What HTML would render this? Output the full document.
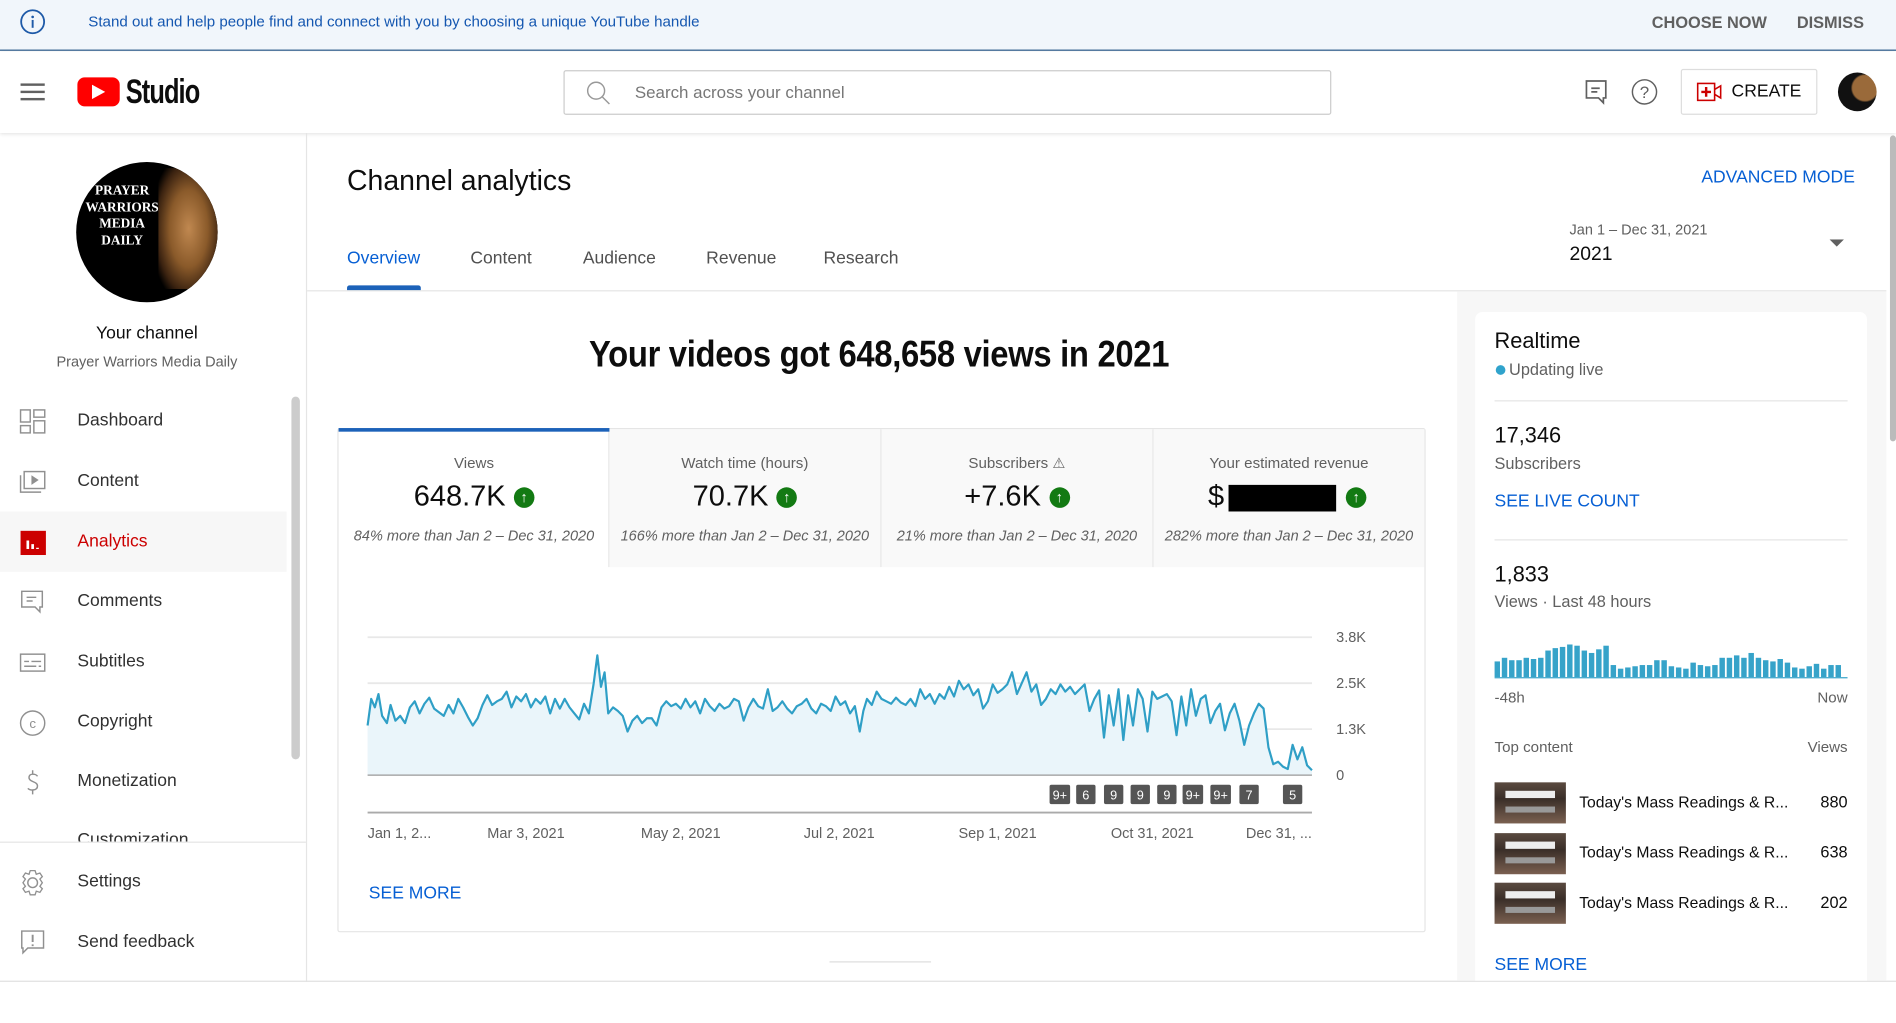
<!DOCTYPE html>
<html><head><meta charset="utf-8"><style>
*{margin:0;padding:0;box-sizing:border-box}
html,body{width:1896px;height:1023px;overflow:hidden;background:#fff}
#w{position:absolute;left:0;top:0;width:1568px;height:846px;transform:scale(1.20918);transform-origin:0 0;font-family:"Liberation Sans",Arial,sans-serif;color:#0d0d0d}
.a{position:absolute;line-height:1;white-space:nowrap}
.blue{color:#065fd4}
.g{color:#606060}
.nav{font-size:14.5px;color:#303030;left:64px}
.ic{position:absolute;left:16px}
</style></head><body><div id="w">
<!-- banner -->
<div class="a" style="left:0;top:0;width:1568px;height:42px;background:#f1f6fb;border-bottom:1px solid #2a5a8a"></div>
<svg class="a" style="left:16px;top:7px" width="22" height="22" viewBox="0 0 22 22"><circle cx="11" cy="11" r="9.5" fill="none" stroke="#1e5aa8" stroke-width="1.5"/><rect x="10.2" y="9.5" width="1.6" height="6.5" fill="#1e5aa8"/><circle cx="11" cy="7" r="1.1" fill="#1e5aa8"/></svg>
<div class="a blue" style="left:73px;top:12px;font-size:12.5px;color:#1557b0">Stand out and help people find and connect with you by choosing a unique YouTube handle</div>
<div class="a g" style="left:1366px;top:12px;font-size:13.5px;font-weight:bold">CHOOSE NOW</div>
<div class="a g" style="left:1486px;top:12px;font-size:13.5px;font-weight:bold">DISMISS</div>
<!-- header -->
<div class="a" style="left:0;top:43px;width:1568px;height:67px;background:#fff;box-shadow:0 1px 3px rgba(0,0,0,.12)"></div>
<div class="a" style="left:17px;top:69px;width:20px;height:1.5px;background:#606060;box-shadow:0 6px 0 #606060,0 12px 0 #606060"></div>
<div class="a" style="left:64px;top:64px;width:35px;height:24px;background:#f00;border-radius:6px"></div>
<svg class="a" style="left:76px;top:70px" width="12" height="12"><path d="M0 0L11 6L0 12Z" fill="#fff"/></svg>
<div class="a" style="left:104px;top:62px;font-size:28px;font-weight:bold;letter-spacing:-1px;transform:scaleX(.75);transform-origin:0 0">Studio</div>
<div class="a" style="left:466px;top:58px;width:635px;height:37px;border:1px solid #ccc;border-radius:2px"></div>
<svg class="a" style="left:484px;top:66px" width="22" height="22"><circle cx="9" cy="9" r="7" fill="none" stroke="#999" stroke-width="1.2"/><path d="M14 14L20 20" stroke="#999" stroke-width="1.2"/></svg>
<div class="a" style="left:525px;top:69px;font-size:14px;color:#777">Search across your channel</div>
<svg class="a" style="left:1309px;top:65px" width="22" height="22"><path d="M3 2H19V16H17V20L13 16H3Z" fill="none" stroke="#606060" stroke-width="1.4"/><path d="M7 8H14M7 11H12" stroke="#606060" stroke-width="1.4"/></svg>
<svg class="a" style="left:1349px;top:65px" width="22" height="22"><circle cx="11" cy="11" r="10" fill="none" stroke="#606060" stroke-width="1.2"/><text x="11" y="16" text-anchor="middle" font-size="14" fill="#606060" font-family="Liberation Sans">?</text></svg>
<div class="a" style="left:1390px;top:57px;width:113px;height:38px;border:1px solid #ddd;border-radius:2px"></div>
<svg class="a" style="left:1403px;top:67px" width="22" height="18"><rect x="1" y="2" width="14" height="14" fill="none" stroke="#cc0000" stroke-width="1.3"/><path d="M8 5V13M4 9H12" stroke="#cc0000" stroke-width="2"/><path d="M15 7L20 4V14L15 11" fill="none" stroke="#cc0000" stroke-width="1.3"/></svg>
<div class="a" style="left:1432px;top:69px;font-size:14.5px;font-weight:500">CREATE</div>
<div class="a" style="left:1520px;top:60px;width:32px;height:32px;border-radius:50%;background:radial-gradient(circle at 70% 40%,#9a6a3a 0 35%,#111 40%)"></div>
<!-- sidebar -->
<div class="a" style="left:253px;top:110px;width:1px;height:702px;background:#e5e5e5"></div>
<div class="a" style="left:63px;top:134px;width:117px;height:116px;border-radius:50%;background:#000;overflow:hidden">
<div class="a" style="left:68px;top:5px;width:50px;height:100px;background:radial-gradient(ellipse at 50% 50%,#c08850 0,#8a5a2a 45%,#3a2210 75%,#000 90%)"></div>
<div class="a" style="left:4px;top:18px;font-family:'Liberation Serif',serif;font-weight:bold;color:#fff;font-size:11px;line-height:13.5px;text-align:center;width:68px;white-space:normal">PRAYER WARRIORS MEDIA DAILY</div></div>
<div class="a" style="left:0;top:269px;width:243px;text-align:center;font-size:14.5px">Your channel</div>
<div class="a g" style="left:0;top:293px;width:243px;text-align:center;font-size:12px">Prayer Warriors Media Daily</div>
<div class="a" style="left:241px;top:328px;width:7px;height:300px;background:#ccc;border-radius:4px"></div>
<div class="a" style="left:0;top:423px;width:237px;height:50px;background:#f7f7f7"></div>
<svg class="ic" style="top:338px" width="22" height="22"><g fill="none" stroke="#909090" stroke-width="1.2"><rect x="1" y="1" width="8" height="10"/><rect x="12" y="1" width="9" height="6"/><rect x="1" y="14" width="8" height="6"/><rect x="12" y="10" width="9" height="10"/></g></svg>
<div class="a nav" style="top:341px">Dashboard</div>
<svg class="ic" style="top:388px" width="22" height="22"><g fill="none" stroke="#909090" stroke-width="1.2"><rect x="4" y="2" width="17" height="14"/><path d="M1 5V19H18"/></g><path d="M10 5L16 9L10 13Z" fill="#909090"/></svg>
<div class="a nav" style="top:391px">Content</div>
<svg class="ic" style="top:438px" width="22" height="22"><rect x="1" y="1" width="21" height="20" fill="#cc0000"/><path d="M7 9V16M11 12V16M15 15V16" stroke="#fff" stroke-width="2.2"/></svg>
<div class="a nav" style="top:441px;color:#cc0000">Analytics</div>
<svg class="ic" style="top:487px" width="22" height="22"><path d="M2 2H19V15H17V19L13 15H2Z" fill="none" stroke="#909090" stroke-width="1.2"/><path d="M6 7H14M6 10H11" stroke="#909090" stroke-width="1.2"/></svg>
<div class="a nav" style="top:490px">Comments</div>
<svg class="ic" style="top:537px" width="22" height="22"><rect x="1" y="4" width="20" height="14" fill="none" stroke="#909090" stroke-width="1.2"/><path d="M4 10H8M10 10H18M4 14H14M16 14H18" stroke="#909090" stroke-width="1.2"/></svg>
<div class="a nav" style="top:540px">Subtitles</div>
<svg class="ic" style="top:587px" width="22" height="22"><circle cx="11" cy="11" r="10" fill="none" stroke="#909090" stroke-width="1.2"/><text x="11" y="15" text-anchor="middle" font-size="11" fill="#909090" font-family="Liberation Sans">c</text></svg>
<div class="a nav" style="top:590px">Copyright</div>
<svg class="ic" style="top:636px" width="22" height="22"><path d="M15 6C14 4 8 3 8 7C8 11 15 10 15 14C15 18 9 18 7 16M11 1V4M11 18V21" fill="none" stroke="#909090" stroke-width="1.2"/></svg>
<div class="a nav" style="top:639px">Monetization</div>
<div class="a" style="left:0;top:684px;width:253px;height:12px;overflow:hidden"><div class="a nav" style="top:4px">Customization</div></div>
<div class="a" style="left:0;top:696px;width:253px;height:1px;background:#e5e5e5"></div>
<svg class="ic" style="top:719px" width="22" height="22"><circle cx="11" cy="11" r="4" fill="none" stroke="#909090" stroke-width="1.2"/><path d="M9 1H13L14 4L17 3L19 6L17 8L19 11L17 14L19 16L17 19L14 18L13 21H9L8 18L5 19L3 16L5 14L3 11L5 8L3 6L5 3L8 4Z" fill="none" stroke="#909090" stroke-width="1.1"/></svg>
<div class="a nav" style="top:722px">Settings</div>
<svg class="ic" style="top:768px" width="22" height="22"><path d="M2 2H20V16H7L3 20V16H2Z" fill="none" stroke="#909090" stroke-width="1.2"/><path d="M11 5V11M11 13V14.5" stroke="#909090" stroke-width="1.6"/></svg>
<div class="a nav" style="top:772px">Send feedback</div>
<div class="a" style="left:0;top:811px;width:1568px;height:1px;background:#e0e0e0"></div>
<!-- main header -->
<div class="a" style="left:287px;top:138px;font-size:23.5px">Channel analytics</div>
<div class="a blue" style="left:1407px;top:140px;font-size:14.5px;font-weight:500">ADVANCED MODE</div>
<div class="a blue" style="left:287px;top:207px;font-size:14.5px">Overview</div>
<div class="a g" style="left:389px;top:207px;font-size:14.5px;color:#505050">Content</div>
<div class="a g" style="left:482px;top:207px;font-size:14.5px;color:#505050">Audience</div>
<div class="a g" style="left:584px;top:207px;font-size:14.5px;color:#505050">Revenue</div>
<div class="a g" style="left:681px;top:207px;font-size:14.5px;color:#505050">Research</div>
<div class="a" style="left:287px;top:236px;width:61px;height:4px;background:#1c62b9;border-radius:2px 2px 0 0"></div>
<div class="a" style="left:254px;top:240px;width:1306px;height:1px;background:#e5e5e5"></div>
<div class="a g" style="left:1298px;top:184px;font-size:12px">Jan 1 – Dec 31, 2021</div>
<div class="a" style="left:1298px;top:203px;font-size:16px">2021</div>
<svg class="a" style="left:1513px;top:198px" width="12" height="7"><path d="M0 0H12L6 6Z" fill="#606060"/></svg>
<div class="a" style="left:1563px;top:112px;width:5px;height:253px;background:#bbb;border-radius:3px"></div>
<!-- right column -->
<div class="a" style="left:1205px;top:241px;width:355px;height:570px;background:#f7f7f7"></div>
<div class="a" style="left:1220px;top:258px;width:324px;height:553px;background:#fff;border-radius:6px 6px 0 0"></div>
<div class="a" style="left:1236px;top:273px;font-size:18px;font-weight:500">Realtime</div>
<div class="a" style="left:1237px;top:302px;width:8px;height:8px;border-radius:50%;background:#30a3cc"></div>
<div class="a g" style="left:1248px;top:299px;font-size:13.5px">Updating live</div>
<div class="a" style="left:1236px;top:331px;width:292px;height:1px;background:#e5e5e5"></div>
<div class="a" style="left:1236px;top:351px;font-size:18px;font-weight:500">17,346</div>
<div class="a g" style="left:1236px;top:377px;font-size:13.5px">Subscribers</div>
<div class="a blue" style="left:1236px;top:408px;font-size:14.5px;font-weight:500">SEE LIVE COUNT</div>
<div class="a" style="left:1236px;top:446px;width:292px;height:1px;background:#e5e5e5"></div>
<div class="a" style="left:1236px;top:466px;font-size:18px;font-weight:500">1,833</div>
<div class="a g" style="left:1236px;top:491px;font-size:13.5px">Views · Last 48 hours</div>
<svg class="a" style="left:1236px;top:520px" width="292" height="44">
<g fill="#36a3c9">
<rect x="0" y="27" width="4.5" height="13"/><rect x="6" y="24" width="4.5" height="16"/><rect x="12" y="26" width="4.5" height="14"/><rect x="18" y="26" width="4.5" height="14"/><rect x="24" y="24" width="4.5" height="16"/><rect x="30" y="25" width="4.5" height="15"/><rect x="36" y="24" width="4.5" height="16"/><rect x="42" y="18" width="4.5" height="22"/><rect x="48" y="16" width="4.5" height="24"/><rect x="54" y="15" width="4.5" height="25"/><rect x="60" y="13" width="4.5" height="27"/><rect x="66" y="14" width="4.5" height="26"/><rect x="72" y="18" width="4.5" height="22"/><rect x="78" y="20" width="4.5" height="20"/><rect x="84" y="17" width="4.5" height="23"/><rect x="90" y="14" width="4.5" height="26"/><rect x="96" y="30" width="4.5" height="10"/><rect x="102" y="33" width="4.5" height="7"/><rect x="108" y="32" width="4.5" height="8"/><rect x="114" y="31" width="4.5" height="9"/><rect x="120" y="30" width="4.5" height="10"/><rect x="126" y="30" width="4.5" height="10"/><rect x="132" y="26" width="4.5" height="14"/><rect x="138" y="26" width="4.5" height="14"/><rect x="144" y="31" width="4.5" height="9"/><rect x="150" y="32" width="4.5" height="8"/><rect x="156" y="33" width="4.5" height="7"/><rect x="162" y="28" width="4.5" height="12"/><rect x="168" y="30" width="4.5" height="10"/><rect x="174" y="31" width="4.5" height="9"/><rect x="180" y="30" width="4.5" height="10"/><rect x="186" y="24" width="4.5" height="16"/><rect x="192" y="24" width="4.5" height="16"/><rect x="198" y="22" width="4.5" height="18"/><rect x="204" y="24" width="4.5" height="16"/><rect x="210" y="20" width="4.5" height="20"/><rect x="216" y="24" width="4.5" height="16"/><rect x="222" y="26" width="4.5" height="14"/><rect x="228" y="27" width="4.5" height="13"/><rect x="234" y="25" width="4.5" height="15"/><rect x="240" y="28" width="4.5" height="12"/><rect x="246" y="32" width="4.5" height="8"/><rect x="252" y="33" width="4.5" height="7"/><rect x="258" y="31" width="4.5" height="9"/><rect x="264" y="29" width="4.5" height="11"/><rect x="270" y="33" width="4.5" height="7"/><rect x="276" y="30" width="4.5" height="10"/><rect x="282" y="30" width="4.5" height="10"/>
</g><rect x="0" y="40" width="292" height="1" fill="#36a3c9"/></svg>
<div class="a g" style="left:1236px;top:571px;font-size:12.5px">-48h</div>
<div class="a g" style="left:1470px;top:571px;width:58px;text-align:right;font-size:12.5px">Now</div>
<div class="a g" style="left:1236px;top:612px;font-size:12.5px">Top content</div>
<div class="a g" style="left:1470px;top:612px;width:58px;text-align:right;font-size:12.5px">Views</div>
<div class="a" style="left:1236px;top:647px;width:59px;height:34px;background:linear-gradient(#5a4a40,#3a2e28 40%,#7a6050);"><div style="margin:7px 9px;height:6px;background:#eee"></div><div style="margin:0 9px;height:5px;background:#999"></div></div>
<div class="a" style="left:1236px;top:689px;width:59px;height:34px;background:linear-gradient(#5a4a40,#3a2e28 40%,#7a6050);"><div style="margin:7px 9px;height:6px;background:#eee"></div><div style="margin:0 9px;height:5px;background:#999"></div></div>
<div class="a" style="left:1236px;top:730px;width:59px;height:34px;background:linear-gradient(#5a4a40,#3a2e28 40%,#7a6050);"><div style="margin:7px 9px;height:6px;background:#eee"></div><div style="margin:0 9px;height:5px;background:#999"></div></div>
<div class="a" style="left:1306px;top:657px;font-size:13px">Today's Mass Readings &amp; R...</div>
<div class="a" style="left:1306px;top:698px;font-size:13px">Today's Mass Readings &amp; R...</div>
<div class="a" style="left:1306px;top:740px;font-size:13px">Today's Mass Readings &amp; R...</div>
<div class="a" style="left:1470px;top:657px;width:58px;text-align:right;font-size:13.5px">880</div>
<div class="a" style="left:1470px;top:698px;width:58px;text-align:right;font-size:13.5px">638</div>
<div class="a" style="left:1470px;top:740px;width:58px;text-align:right;font-size:13.5px">202</div>
<div class="a blue" style="left:1236px;top:791px;font-size:14.5px;font-weight:500">SEE MORE</div>
<!-- headline -->
<div class="a" style="left:727px;top:277px;font-size:31px;font-weight:bold;transform:translateX(-50%) scaleX(.875);letter-spacing:-.3px">Your videos got 648,658 views in 2021</div>
<!-- metric card -->
<div class="a" style="left:279px;top:354px;width:900px;height:417px;border:1px solid #e5e5e5;border-radius:2px"></div>
<div class="a" style="left:504px;top:355px;width:674px;height:114px;background:#f9f9f9"></div>
<div class="a" style="left:728px;top:355px;width:1px;height:114px;background:#e8e8e8"></div>
<div class="a" style="left:953px;top:355px;width:1px;height:114px;background:#e8e8e8"></div>
<div class="a" style="left:503px;top:355px;width:1px;height:114px;background:#e8e8e8"></div>
<div class="a" style="left:280px;top:354px;width:224px;height:3px;background:#1c62b9"></div>
<div class="a g" style="left:280px;top:377px;width:224px;text-align:center;font-size:12.5px">Views</div>
<div class="a g" style="left:504px;top:377px;width:224px;text-align:center;font-size:12.5px">Watch time (hours)</div>
<div class="a g" style="left:729px;top:377px;width:224px;text-align:center;font-size:12.5px">Subscribers <span style="font-size:12px">⚠</span></div>
<div class="a g" style="left:954px;top:377px;width:224px;text-align:center;font-size:12.5px">Your estimated revenue</div>
<div class="a" style="left:280px;top:399px;width:224px;text-align:center;font-size:24px">648.7K <span style="display:inline-block;width:17px;height:17px;border-radius:50%;background:#137a13;color:#fff;font-size:12px;line-height:17px;font-weight:bold;vertical-align:3px">↑</span></div>
<div class="a" style="left:504px;top:399px;width:224px;text-align:center;font-size:24px">70.7K <span style="display:inline-block;width:17px;height:17px;border-radius:50%;background:#137a13;color:#fff;font-size:12px;line-height:17px;font-weight:bold;vertical-align:3px">↑</span></div>
<div class="a" style="left:729px;top:399px;width:224px;text-align:center;font-size:24px">+7.6K <span style="display:inline-block;width:17px;height:17px;border-radius:50%;background:#137a13;color:#fff;font-size:12px;line-height:17px;font-weight:bold;vertical-align:3px">↑</span></div>
<div class="a" style="left:999px;top:399px;font-size:24px">$</div>
<div class="a" style="left:1016px;top:401px;width:89px;height:22px;background:#000"></div>
<div class="a" style="left:1113px;top:403px;width:17px;height:17px;border-radius:50%;background:#137a13;color:#fff;font-size:12px;line-height:17px;font-weight:bold;text-align:center">↑</div>
<div class="a g" style="left:280px;top:437px;width:224px;text-align:center;font-size:12px;font-style:italic">84% more than Jan 2 – Dec 31, 2020</div>
<div class="a g" style="left:504px;top:437px;width:224px;text-align:center;font-size:12px;font-style:italic">166% more than Jan 2 – Dec 31, 2020</div>
<div class="a g" style="left:729px;top:437px;width:224px;text-align:center;font-size:12px;font-style:italic">21% more than Jan 2 – Dec 31, 2020</div>
<div class="a g" style="left:954px;top:437px;width:224px;text-align:center;font-size:12px;font-style:italic">282% more than Jan 2 – Dec 31, 2020</div>
<!-- chart -->
<svg class="a" style="left:0;top:0" width="1200" height="720">
<g stroke="#e8e8e8" stroke-width="1.5"><path d="M304 527H1085M304 565H1085M304 603H1085"/></g>
<polygon fill="#eaf5fa" points="304,641 304,600 307,578 310,585 313,574 316,592 320,598 323,583 327,596 331,592 335,598 339,585 343,580 347,590 351,582 355,577 359,586 363,589 367,592 371,583 375,590 379,578 383,585 387,593 391,600 395,594 399,583 403,575 407,583 411,580 415,578 419,572 423,585 427,576 431,580 435,574 439,585 443,578 447,582 451,576 455,590 459,578 463,586 467,578 471,585 475,590 479,595 483,582 487,590 491,565 494,542 497,568 500,556 503,590 507,585 511,588 515,592 519,605 523,596 527,592 531,598 535,594 539,594 543,600 547,585 551,580 555,584 559,582 563,586 567,578 571,585 575,580 579,590 583,578 587,584 591,588 595,582 599,586 603,584 607,578 611,580 615,596 619,585 623,578 627,584 631,586 635,570 639,588 643,585 647,580 651,586 655,590 659,584 663,582 667,578 671,586 675,590 679,582 683,584 687,588 691,576 695,583 699,580 703,590 707,584 711,605 714,588 717,578 721,583 725,572 729,578 733,580 737,582 741,577 745,581 749,583 753,578 757,584 761,570 765,578 769,574 773,582 777,574 781,578 785,568 789,576 793,563 797,570 801,566 805,575 809,570 813,586 817,580 821,566 825,573 829,570 833,566 837,556 841,574 845,565 849,556 853,572 857,566 861,583 865,578 869,570 873,574 877,566 881,572 885,568 889,574 893,570 897,566 901,588 905,578 909,571 913,610 917,575 921,600 925,570 929,612 933,575 937,600 941,570 945,578 949,605 953,572 957,578 961,576 965,574 969,580 973,608 977,576 981,600 985,570 989,592 993,578 997,575 1001,598 1005,588 1009,582 1013,604 1017,590 1021,582 1025,596 1029,616 1033,600 1037,590 1041,582 1045,586 1049,618 1053,632 1057,630 1061,634 1065,636 1069,616 1073,628 1077,618 1081,633 1085,637 1085,641"/>
<polyline fill="none" stroke="#2f9fc6" stroke-width="1.8" stroke-linejoin="round" points="304,600 307,578 310,585 313,574 316,592 320,598 323,583 327,596 331,592 335,598 339,585 343,580 347,590 351,582 355,577 359,586 363,589 367,592 371,583 375,590 379,578 383,585 387,593 391,600 395,594 399,583 403,575 407,583 411,580 415,578 419,572 423,585 427,576 431,580 435,574 439,585 443,578 447,582 451,576 455,590 459,578 463,586 467,578 471,585 475,590 479,595 483,582 487,590 491,565 494,542 497,568 500,556 503,590 507,585 511,588 515,592 519,605 523,596 527,592 531,598 535,594 539,594 543,600 547,585 551,580 555,584 559,582 563,586 567,578 571,585 575,580 579,590 583,578 587,584 591,588 595,582 599,586 603,584 607,578 611,580 615,596 619,585 623,578 627,584 631,586 635,570 639,588 643,585 647,580 651,586 655,590 659,584 663,582 667,578 671,586 675,590 679,582 683,584 687,588 691,576 695,583 699,580 703,590 707,584 711,605 714,588 717,578 721,583 725,572 729,578 733,580 737,582 741,577 745,581 749,583 753,578 757,584 761,570 765,578 769,574 773,582 777,574 781,578 785,568 789,576 793,563 797,570 801,566 805,575 809,570 813,586 817,580 821,566 825,573 829,570 833,566 837,556 841,574 845,565 849,556 853,572 857,566 861,583 865,578 869,570 873,574 877,566 881,572 885,568 889,574 893,570 897,566 901,588 905,578 909,571 913,610 917,575 921,600 925,570 929,612 933,575 937,600 941,570 945,578 949,605 953,572 957,578 961,576 965,574 969,580 973,608 977,576 981,600 985,570 989,592 993,578 997,575 1001,598 1005,588 1009,582 1013,604 1017,590 1021,582 1025,596 1029,616 1033,600 1037,590 1041,582 1045,586 1049,618 1053,632 1057,630 1061,634 1065,636 1069,616 1073,628 1077,618 1081,633 1085,637"/>
<path d="M304 641H1085" stroke="#999" stroke-width="1"/>
<path d="M304 672H1085" stroke="#aaa" stroke-width="1.5"/>
<g fill="#555"><rect x="868" y="649" width="17" height="16" rx="1.5"/><rect x="890" y="649" width="16" height="16" rx="1.5"/><rect x="913" y="649" width="16" height="16" rx="1.5"/><rect x="935" y="649" width="16" height="16" rx="1.5"/><rect x="957" y="649" width="16" height="16" rx="1.5"/><rect x="978" y="649" width="17" height="16" rx="1.5"/><rect x="1001" y="649" width="17" height="16" rx="1.5"/><rect x="1025" y="649" width="16" height="16" rx="1.5"/><rect x="1061" y="649" width="16" height="16" rx="1.5"/></g>
<g fill="#fff" font-family="Liberation Sans" font-size="10.5" text-anchor="middle"><text x="876.5" y="661">9+</text><text x="898" y="661">6</text><text x="921" y="661">9</text><text x="943" y="661">9</text><text x="965" y="661">9</text><text x="986.5" y="661">9+</text><text x="1009.5" y="661">9+</text><text x="1033" y="661">7</text><text x="1069" y="661">5</text></g>
<g fill="#606060" font-family="Liberation Sans" font-size="12"><text x="1105" y="531">3.8K</text><text x="1105" y="569">2.5K</text><text x="1105" y="607">1.3K</text><text x="1105" y="645">0</text>
<text x="304" y="693">Jan 1, 2...</text><text x="435" y="693" text-anchor="middle">Mar 3, 2021</text><text x="563" y="693" text-anchor="middle">May 2, 2021</text><text x="694" y="693" text-anchor="middle">Jul 2, 2021</text><text x="825" y="693" text-anchor="middle">Sep 1, 2021</text><text x="953" y="693" text-anchor="middle">Oct 31, 2021</text><text x="1085" y="693" text-anchor="end">Dec 31, ...</text></g>
</svg>
<div class="a blue" style="left:305px;top:732px;font-size:14.5px;font-weight:500">SEE MORE</div>
<div class="a" style="left:686px;top:795px;width:84px;height:1px;background:#ddd"></div>
</div></body></html>
